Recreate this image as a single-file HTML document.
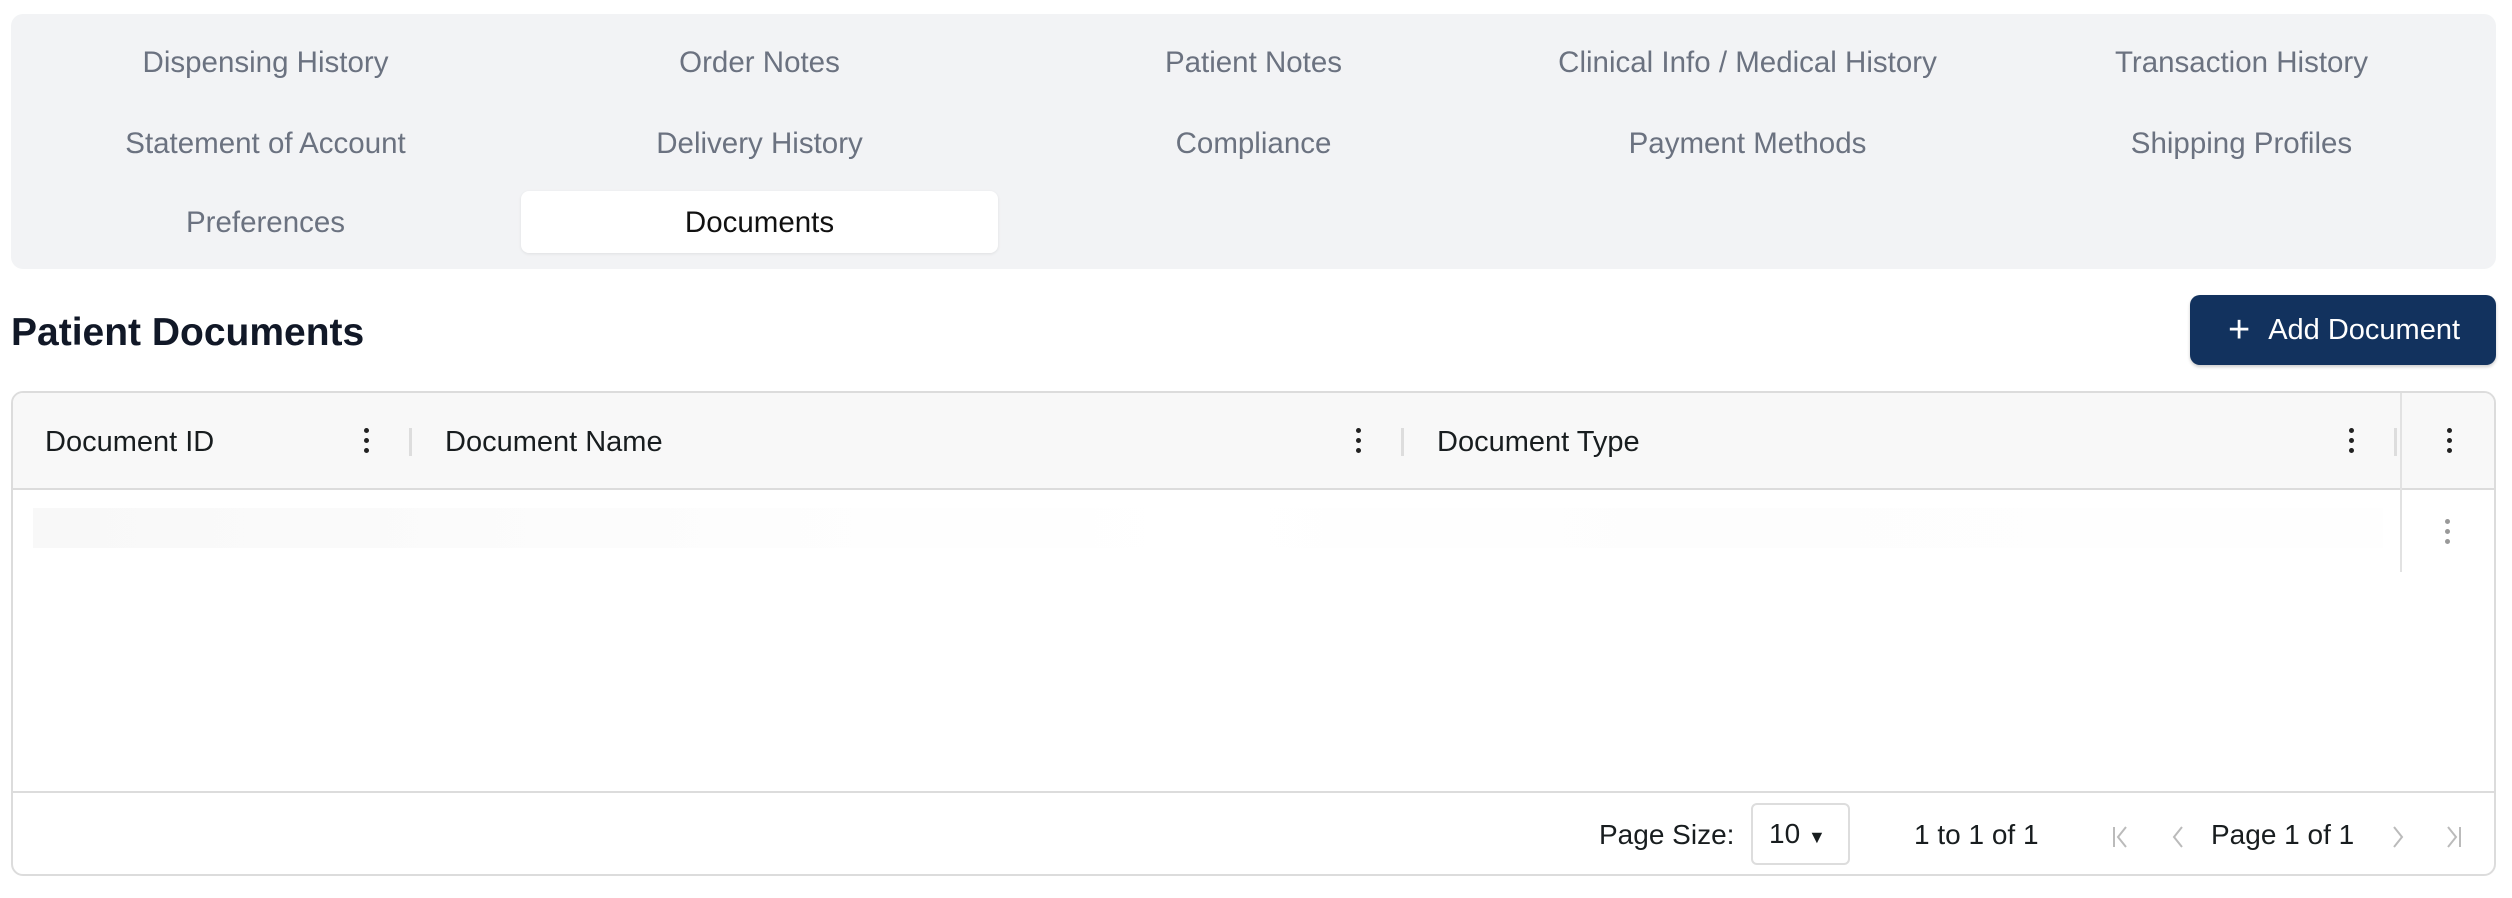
<!DOCTYPE html>
<html><head><style>
*{box-sizing:border-box;margin:0;padding:0}
body{width:2512px;height:898px;background:#fff;font-family:"Liberation Sans",sans-serif;position:relative;overflow:hidden}
.tabs{position:absolute;left:11px;top:14px;width:2485px;height:255px;background:#f2f3f5;border-radius:12px}
.t{position:absolute;width:477px;height:62px;line-height:64px;text-align:center;font-size:29.5px;color:#6b7280}
.t.a{background:#fff;color:#111;border-radius:8px;box-shadow:0 1px 3px rgba(0,0,0,.08)}
h1{position:absolute;left:11px;top:311px;font-size:39px;font-weight:bold;color:#111827}
.btn{position:absolute;left:2190px;top:295px;width:306px;height:70px;background:#12325e;border-radius:10px;color:#fff;font-size:29px;line-height:70px;padding-left:38px;box-shadow:0 2px 3px rgba(0,0,0,.2)}
.btn b{font-weight:normal;font-size:38px;vertical-align:-3px;margin-right:18px}
.tbl{position:absolute;left:11px;top:391px;width:2485px;height:485px;border:2px solid #dcdcdc;border-radius:12px;overflow:hidden}
.hd{position:absolute;left:0;top:0;width:100%;height:97px;background:#f8f8f8;border-bottom:2px solid #dcdcdc}
.ht{position:absolute;top:0;line-height:99px;font-size:29px;color:#181d1f}
.dots{position:absolute;width:6px}
.dots i{display:block;width:5px;height:5px;border-radius:50%;background:#222;margin-bottom:5px}
.rs{position:absolute;top:35px;width:3px;height:28px;background:#ddd}
.ft{position:absolute;left:0;top:398px;width:100%;height:85px;border-top:2px solid #dcdcdc}
.fx{position:absolute;font-size:28px;color:#181d1f;top:26px}
.ic{position:absolute;top:30px}
</style></head><body>
<div class="tabs">
<div class="t" style="left:16px;top:17px">Dispensing History</div>
<div class="t" style="left:510px;top:17px">Order Notes</div>
<div class="t" style="left:1004px;top:17px">Patient Notes</div>
<div class="t" style="left:1498px;top:17px">Clinical Info / Medical History</div>
<div class="t" style="left:1992px;top:17px">Transaction History</div>
<div class="t" style="left:16px;top:98px">Statement of Account</div>
<div class="t" style="left:510px;top:98px">Delivery History</div>
<div class="t" style="left:1004px;top:98px">Compliance</div>
<div class="t" style="left:1498px;top:98px">Payment Methods</div>
<div class="t" style="left:1992px;top:98px">Shipping Profiles</div>
<div class="t" style="left:16px;top:177px">Preferences</div>
<div class="t a" style="left:510px;top:177px">Documents</div>
</div>
<h1>Patient Documents</h1>
<div class="btn"><b>+</b>Add Document</div>
<div class="tbl">
<div class="hd">
<div class="ht" style="left:32px">Document ID</div>
<div class="ht" style="left:432px">Document Name</div>
<div class="ht" style="left:1424px">Document Type</div>
<div class="dots" style="left:351px;top:35px"><i></i><i></i><i></i></div>
<div class="dots" style="left:1343px;top:35px"><i></i><i></i><i></i></div>
<div class="dots" style="left:2336px;top:35px"><i></i><i></i><i></i></div>
<div class="dots" style="left:2434px;top:35px"><i></i><i></i><i></i></div>
<div class="rs" style="left:396px"></div>
<div class="rs" style="left:1388px"></div>
<div class="rs" style="left:2381px"></div>
</div>
<div style="position:absolute;left:2387px;top:0;width:2px;height:179px;background:#e2e2e2"></div>
<div style="position:absolute;left:20px;top:115px;width:2350px;height:40px;background:linear-gradient(90deg,#f8f8f8,#fdfdfd 30%,#fff 50%,#fdfdfd 70%,#fefefe)"></div>
<div class="dots" style="left:2432px;top:126px"><i style="background:#999"></i><i style="background:#999"></i><i style="background:#999"></i></div>
<div class="ft">
<div class="fx" style="left:1586px">Page Size:</div>
<div style="position:absolute;left:1738px;top:10px;width:99px;height:62px;border:2px solid #ddd;border-radius:6px;font-size:28px;line-height:58px;padding-left:16px;color:#181d1f">10 <span style="font-size:18px">▼</span></div>
<div class="fx" style="left:1901px">1 to 1 of 1</div>
<svg class="ic" style="left:2096px" width="24" height="28" viewBox="0 0 24 28" fill="none" stroke="#bbb" stroke-width="2"><path d="M5 4v20M17 4l-8 10 8 10"/></svg>
<svg class="ic" style="left:2156px" width="20" height="28" viewBox="0 0 20 28" fill="none" stroke="#bbb" stroke-width="2"><path d="M13 4l-8 10 8 10"/></svg>
<div class="fx" style="left:2198px">Page 1 of 1</div>
<svg class="ic" style="left:2374px" width="20" height="28" viewBox="0 0 20 28" fill="none" stroke="#bbb" stroke-width="2"><path d="M7 4l8 10-8 10"/></svg>
<svg class="ic" style="left:2428px" width="24" height="28" viewBox="0 0 24 28" fill="none" stroke="#bbb" stroke-width="2"><path d="M7 4l8 10-8 10M19 4v20"/></svg>
</div>
</div>
</body></html>
